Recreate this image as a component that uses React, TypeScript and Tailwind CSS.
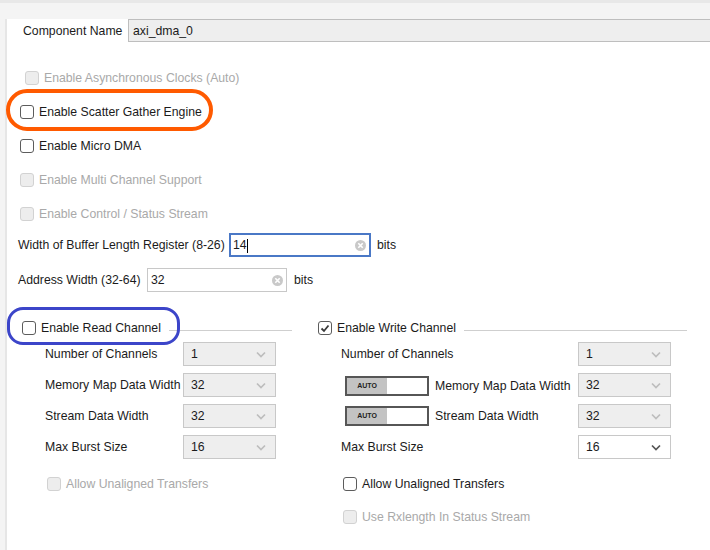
import React from 'react';

type BoxProps = { checked?: boolean; disabled?: boolean };

function CheckBox({ checked = false, disabled = false }: BoxProps) {
  return (
    <span
      className={`flex items-center justify-center w-[14px] h-[14px] rounded-[3px] border shrink-0 ${
        disabled ? 'border-[#d2d2d2] bg-[#ededed]' : 'border-[#5c5c5c] bg-white'
      }`}
    >
      {checked && (
        <svg width="10" height="9" viewBox="0 0 10 9">
          <polyline points="1.5,4.5 4,7 8.5,1.5" fill="none" stroke="#3a3a3a" strokeWidth="1.8" />
        </svg>
      )}
    </span>
  );
}

function CheckRow({ label, checked, disabled }: { label: string } & BoxProps) {
  return (
    <div className="flex items-center gap-[5px] h-[18px]">
      <CheckBox checked={checked} disabled={disabled} />
      <span className={`pt-px whitespace-nowrap ${disabled ? 'text-[#a9a9a9]' : ''}`}>{label}</span>
    </div>
  );
}

function ClearIcon() {
  return (
    <svg width="11" height="11" viewBox="0 0 11 11" className="shrink-0">
      <circle cx="5.5" cy="5.5" r="5.5" fill="#c9c9c9" />
      <path d="M3.3 3.3 L7.7 7.7 M7.7 3.3 L3.3 7.7" stroke="white" strokeWidth="1.6" />
    </svg>
  );
}

function Select({ value, enabled = false }: { value: string; enabled?: boolean }) {
  return (
    <div
      className={`w-[93px] h-[24px] border border-[#c8c8c8] flex items-center justify-between pl-[7px] pr-[9px] shrink-0 ${
        enabled ? 'bg-white' : 'bg-[#eeeeee]'
      }`}
    >
      <span className="pt-px">{value}</span>
      <svg width="10" height="7" viewBox="0 0 10 7">
        <polyline
          points="1,1.5 5,5.5 9,1.5"
          fill="none"
          stroke={enabled ? '#555555' : '#bdbdbd'}
          strokeWidth="1.7"
        />
      </svg>
    </div>
  );
}

function AutoToggle() {
  return (
    <div className="w-[84px] h-[20px] border-2 border-[#565656] flex shrink-0">
      <div className="w-[40px] bg-[#c3c3c3] flex items-center justify-center text-[7px] font-bold text-[#222]">
        AUTO
      </div>
      <div className="flex-1 bg-white" />
    </div>
  );
}

function ChannelHeader({ label, checked }: { label: string; checked?: boolean }) {
  return (
    <div className="flex items-center h-[14px]">
      <CheckBox checked={checked} />
      <span className="ml-[5px] pt-px whitespace-nowrap">{label}</span>
      <div className="flex-1 h-px bg-[#cfcfcf] ml-[8px] mt-[4px]" />
    </div>
  );
}

export default function App() {
  return (
    <div className="relative w-[710px] h-[550px] overflow-hidden bg-[#f4f4f4] font-['Liberation_Sans',Arial,sans-serif] text-[12.25px] text-[#1b1b1b]">
      <div className="h-[3px] bg-[#e8e8e8]" />
      <div className="ml-[5px] h-[547px] border-l-2 border-[#e6e6e6] bg-white">
        {/* Component name */}
        <div className="flex items-center h-[23px] mt-[16px]">
          <span className="w-[121px] pl-[16px] pt-px shrink-0 whitespace-nowrap">Component Name</span>
          <div className="flex-1 h-full bg-[#eeeeee] border border-r-0 border-[#bebebe] flex items-center pl-[4px] pt-px">
            axi_dma_0
          </div>
        </div>

        {/* Option checkboxes */}
        <div className="mt-[19px]">
          <div className="h-[34px] flex items-center pl-[18px]">
            <CheckRow label="Enable Asynchronous Clocks (Auto)" disabled />
          </div>
          <div className="h-[34px] flex items-center pl-[13px]">
            <CheckRow label="Enable Scatter Gather Engine" />
          </div>
          <div className="h-[34px] flex items-center pl-[13px]">
            <CheckRow label="Enable Micro DMA" />
          </div>
          <div className="h-[34px] flex items-center pl-[13px]">
            <CheckRow label="Enable Multi Channel Support" disabled />
          </div>
          <div className="h-[34px] flex items-center pl-[13px]">
            <CheckRow label="Enable Control / Status Stream" disabled />
          </div>
        </div>

        {/* Width fields */}
        <div className="flex items-center h-[24px] mt-[2px] pl-[11px]">
          <span className="w-[211px] pt-px shrink-0 whitespace-nowrap">Width of Buffer Length Register (8-26)</span>
          <div className="w-[142px] h-full border-2 border-[#4a78c6] flex items-center justify-between pl-[2px] pr-[3px]">
            <span className="flex items-center pt-px">
              14<span className="inline-block w-px h-[14px] bg-black" />
            </span>
            <ClearIcon />
          </div>
          <span className="ml-[6px] pt-px">bits</span>
        </div>
        <div className="flex items-center h-[24px] mt-[11px] pl-[11px]">
          <span className="w-[129px] pt-px shrink-0 whitespace-nowrap">Address Width (32-64)</span>
          <div className="w-[140px] h-full border border-[#c8c8c8] flex items-center justify-between pl-[3px] pr-[3px]">
            <span className="pt-px">32</span>
            <ClearIcon />
          </div>
          <span className="ml-[7px] pt-px">bits</span>
        </div>

        {/* Channels */}
        <div className="flex mt-[29px] pl-[15px]">
          {/* Read channel */}
          <div className="w-[270px]">
            <ChannelHeader label="Enable Read Channel" />
            <div className="flex flex-col gap-[7px] mt-[7px]">
              {[
                ['Number of Channels', '1'],
                ['Memory Map Data Width', '32'],
                ['Stream Data Width', '32'],
                ['Max Burst Size', '16'],
              ].map(([label, value]) => (
                <div key={label} className="flex items-center h-[24px]">
                  <span className="w-[161px] pl-[23px] pt-px shrink-0 whitespace-nowrap">{label}</span>
                  <Select value={value} />
                </div>
              ))}
            </div>
            <div className="mt-[16px] pl-[25px]">
              <CheckRow label="Allow Unaligned Transfers" disabled />
            </div>
          </div>

          {/* Write channel */}
          <div className="w-[369px] ml-[26px]">
            <ChannelHeader label="Enable Write Channel" checked />
            <div className="flex flex-col gap-[7px] mt-[7px]">
              <div className="flex items-center h-[24px]">
                <span className="w-[260px] pl-[23px] pt-px shrink-0 whitespace-nowrap">Number of Channels</span>
                <Select value="1" />
              </div>
              <div className="flex items-center h-[24px]">
                <div className="w-[260px] pl-[27px] shrink-0 flex items-center gap-[6px] pt-[2px] whitespace-nowrap">
                  <AutoToggle />
                  <span className="pt-px">Memory Map Data Width</span>
                </div>
                <Select value="32" />
              </div>
              <div className="flex items-center h-[24px]">
                <div className="w-[260px] pl-[27px] shrink-0 flex items-center gap-[6px] whitespace-nowrap">
                  <AutoToggle />
                  <span className="pt-px">Stream Data Width</span>
                </div>
                <Select value="32" />
              </div>
              <div className="flex items-center h-[24px]">
                <span className="w-[260px] pl-[23px] pt-px shrink-0 whitespace-nowrap">Max Burst Size</span>
                <Select value="16" enabled />
              </div>
            </div>
            <div className="mt-[16px] pl-[25px]">
              <CheckRow label="Allow Unaligned Transfers" />
            </div>
            <div className="mt-[15px] pl-[25px]">
              <CheckRow label="Use Rxlength In Status Stream" disabled />
            </div>
          </div>
        </div>
      </div>

      {/* Highlight annotations */}
      <div className="absolute left-[6px] top-[89px] w-[207px] h-[42px] border-4 border-[#ff5a00] rounded-[22px]" />
      <div className="absolute left-[7px] top-[307px] w-[173px] h-[38px] border-[3px] border-[#3c45c9] rounded-[16px]" />
    </div>
  );
}
